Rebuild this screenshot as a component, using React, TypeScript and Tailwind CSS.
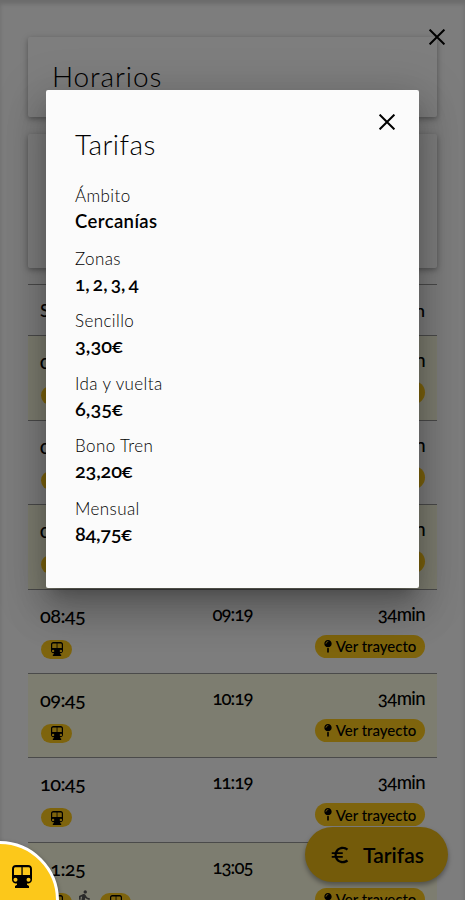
import { FaMapPin } from "react-icons/fa";
import { MdDirectionsWalk, MdEuroSymbol } from "react-icons/md";

type Trip = { departure: string; arrival: string; duration?: string; transfer?: boolean };

const trips: Trip[] = [
  { departure: "05:45", arrival: "06:19", duration: "34min" },
  { departure: "06:45", arrival: "07:19", duration: "34min" },
  { departure: "07:45", arrival: "08:19", duration: "34min" },
  { departure: "08:45", arrival: "09:19", duration: "34min" },
  { departure: "09:45", arrival: "10:19", duration: "34min" },
  { departure: "10:45", arrival: "11:19", duration: "34min" },
  { departure: "11:25", arrival: "13:05", transfer: true },
];

const fares = [
  { label: "Ámbito", value: "Cercanías", style: "pt-px text-[18.5px] tracking-[0.4px]" },
  { label: "Zonas", value: "1, 2, 3, 4", style: "text-[19px] [word-spacing:-1.500px]" },
  { label: "Sencillo", value: "3,30€", style: "text-[20px]" },
  { label: "Ida y vuelta", value: "6,35€", style: "text-[20px]" },
  { label: "Bono Tren", value: "23,20€", style: "text-[20px] tracking-[-0.2px]" },
  { label: "Mensual", value: "84,75€", style: "text-[20px] tracking-[-0.3px]" },
];

const TrainIcon = ({ className }: { className: string }) => (
  <svg viewBox="0 0 20 23" className={className} fill="currentColor">
    <path
      fillRule="evenodd"
      d="M4 0h12c2.500 0 4 1.500 4 4v10.500c0 2-1.200 3.500-3.500 4h-1.500v1.300l2 1.200v2H3v-2l2-1.200v-1.300H3.500C1.200 18 0 16.500 0 14.500V4c0-2.500 1.500-4 4-4zM3.500 2.200C2.500 2.200 2 2.800 2 3.800V10h7.400V2.200zM10.700 2.200V10H18V3.800c0-1-.5-1.600-1.500-1.600zM3.500 12.700a2 2 0 1 0 0 4 2 2 0 0 0 0-4zM16.500 12.700a2 2 0 1 0 0 4 2 2 0 0 0 0-4z"
    />
  </svg>
);

const CloseIcon = ({ className }: { className: string }) => (
  <svg viewBox="0 0 16 16" className={className} stroke="currentColor" strokeWidth="2" fill="none">
    <path d="M.6.6l14.800 14.800M15.400.6L.6 15.400" />
  </svg>
);

const TrainChip = () => (
  <span className="flex h-[19px] w-[31px] items-center justify-center rounded-full bg-[#fcc81a]">
    <TrainIcon className="h-[14px] w-3" />
  </span>
);

const TripRow = ({ trip, striped }: { trip: Trip; striped: boolean }) => (
  <div
    className={`flex h-[84.4px] shrink-0 justify-between border-b border-[#949494] px-3 ${striped ? "bg-[#fbfae0]" : ""}`}
  >
    <div className="flex w-[110px] flex-col pt-[15px]">
      <span className="h-5 text-[20px] leading-5 font-medium tracking-[-0.6px]">{trip.departure}</span>
      <div className="mt-[15px] ml-px flex items-start">
        <TrainChip />
        {trip.transfer && (
          <>
            <MdDirectionsWalk className="-mt-1 mr-1.5 ml-0.5 size-5 text-[#555]" />
            <TrainChip />
          </>
        )}
      </div>
    </div>
    <span className="w-[76px] pt-3.5 text-center text-[18.5px] leading-5 font-medium tracking-[-0.9px]">
      {trip.arrival}
    </span>
    <div className="flex w-[110px] flex-col items-end pt-3.5">
      <span className="h-5 text-[18.5px] leading-5 font-medium tracking-[-0.6px]">{trip.duration}</span>
      <span className="mt-[11px] flex h-[23px] w-[110px] items-center justify-center gap-1 rounded-full bg-[#fcc81a] text-[15px] font-medium">
        <FaMapPin className="h-[13px] w-2" />
        Ver trayecto
      </span>
    </div>
  </div>
);

const FareModal = () => (
  <section className="absolute top-[90px] left-[46px] h-[498px] w-[373px] rounded-xs bg-[#fbfbfb] px-[29px] pt-[37px] shadow-[0_24px_38px_3px_rgba(0,0,0,0.18),0_9px_46px_8px_rgba(0,0,0,0.15),0_11px_15px_-7px_rgba(0,0,0,0.22)]">
    <button className="absolute top-6 right-6">
      <CloseIcon className="size-4" />
    </button>
    <h2 className="text-[28px] leading-[34px] font-light tracking-[0.5px]">Tarifas</h2>
    <dl className="mt-[22px] flex flex-col">
      {fares.map(({ label, value, style }) => (
        <div key={label} className="h-[62.6px]">
          <dt className="text-[17px] leading-[25px] font-light tracking-[0.4px]">{label}</dt>
          <dd className={`leading-[25px] font-semibold ${style}`}>{value}</dd>
        </div>
      ))}
    </dl>
  </section>
);

export default function App() {
  return (
    <div className="relative h-[900px] w-[465px] overflow-hidden bg-[#fafafa] font-['Lato',sans-serif] text-black oldstyle-nums">
      <main className="flex flex-col px-7 pt-[37px] shadow-[inset_0_4px_4px_rgba(0,0,0,0.14)]">
        <div className="h-20 rounded-xs bg-[#fdfdfd] px-6 pt-[22px] shadow-[0_2px_5px_0_rgba(0,0,0,0.26),0_2px_10px_0_rgba(0,0,0,0.12)]">
          <h1 className="text-[28px] leading-[34px] font-light tracking-[0.9px]">Horarios</h1>
        </div>
        <div className="mt-[17px] h-[134px] rounded-xs bg-[#fdfdfd] shadow-[0_2px_5px_0_rgba(0,0,0,0.26),0_2px_10px_0_rgba(0,0,0,0.12)]" />
        <div className="mt-4 flex h-[52.400px] items-center justify-between border-y border-[#949494] px-3 text-[18px] font-medium">
          <span>Salida</span>
          <span>Llegada</span>
          <span>Duración</span>
        </div>
        {trips.map((trip, i) => (
          <TripRow key={trip.departure} trip={trip} striped={i % 2 === 0} />
        ))}
      </main>
      <CloseIcon className="absolute top-[29px] left-[429px] size-4" />
      <button className="absolute top-[827px] left-[305px] flex h-[55px] w-[143px] items-center justify-center gap-3 rounded-full bg-[#e8b714] text-[21px] font-semibold shadow-[0_3px_5px_rgba(0,0,0,0.35)]">
        <MdEuroSymbol className="size-[22px]" />
        Tarifas
      </button>
      <div className="absolute inset-0 bg-black/50" />
      <FareModal />
      <div className="absolute top-[841px] left-[-60px] size-[119px] rounded-full border-[3px] border-white bg-[#fcc81a] shadow-[0_2px_5px_rgba(0,0,0,0.4)]">
        <TrainIcon className="absolute top-[21px] left-[69px] h-[23px] w-5" />
      </div>
    </div>
  );
}
